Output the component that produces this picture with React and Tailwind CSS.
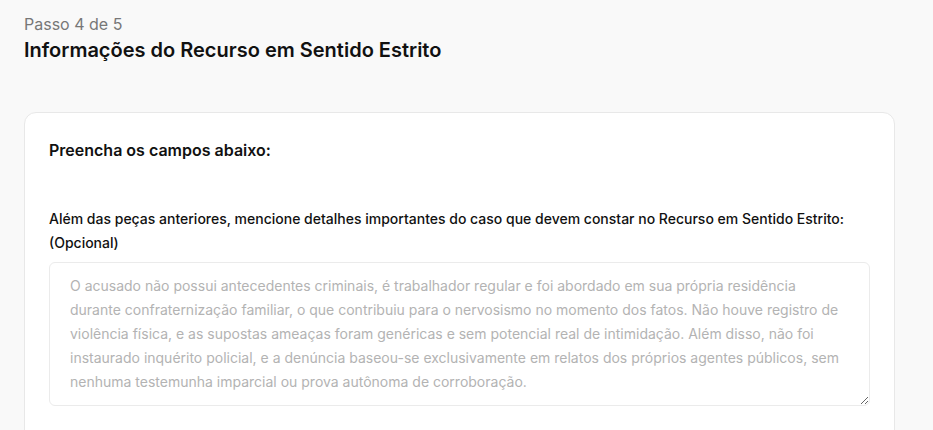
import React from "react";

export default function App() {
  return (
    <div className="min-h-screen bg-[#f9f9f9] font-['Inter',sans-serif] text-[#111]">
      <div className="px-6 pt-3">
        <p className="text-[16px] leading-6 text-[#777]">Passo 4 de 5</p>
        <h1 className="text-[20px] leading-7 font-semibold text-[#111]">
          Informações do Recurso em Sentido Estrito
        </h1>
        <div className="mt-[48px] mr-[14px] rounded-xl border border-[#e8e8e8] bg-white px-6 pt-[25px] pb-10">
          <h2 className="text-[16px] leading-6 font-semibold text-[#111]">Preencha os campos abaixo:</h2>
          <div className="mt-[45px]">
            <label className="block text-[14px] leading-6 font-medium text-[#111]">
              Além das peças anteriores, mencione detalhes importantes do caso que devem constar no Recurso em Sentido Estrito: (Opcional)
            </label>
            <textarea
              rows={5}
              className="mt-[7px] block w-full resize-y rounded-md border border-[#ebebeb] bg-white px-5 py-[11px] text-[14px] leading-6 text-[#111] placeholder:text-[#b3b3b3] outline-none"
              placeholder="O acusado não possui antecedentes criminais, é trabalhador regular e foi abordado em sua própria residência durante confraternização familiar, o que contribuiu para o nervosismo no momento dos fatos. Não houve registro de violência física, e as supostas ameaças foram genéricas e sem potencial real de intimidação. Além disso, não foi instaurado inquérito policial, e a denúncia baseou-se exclusivamente em relatos dos próprios agentes públicos, sem nenhuma testemunha imparcial ou prova autônoma de corroboração."
            />
          </div>
        </div>
      </div>
    </div>
  );
}
